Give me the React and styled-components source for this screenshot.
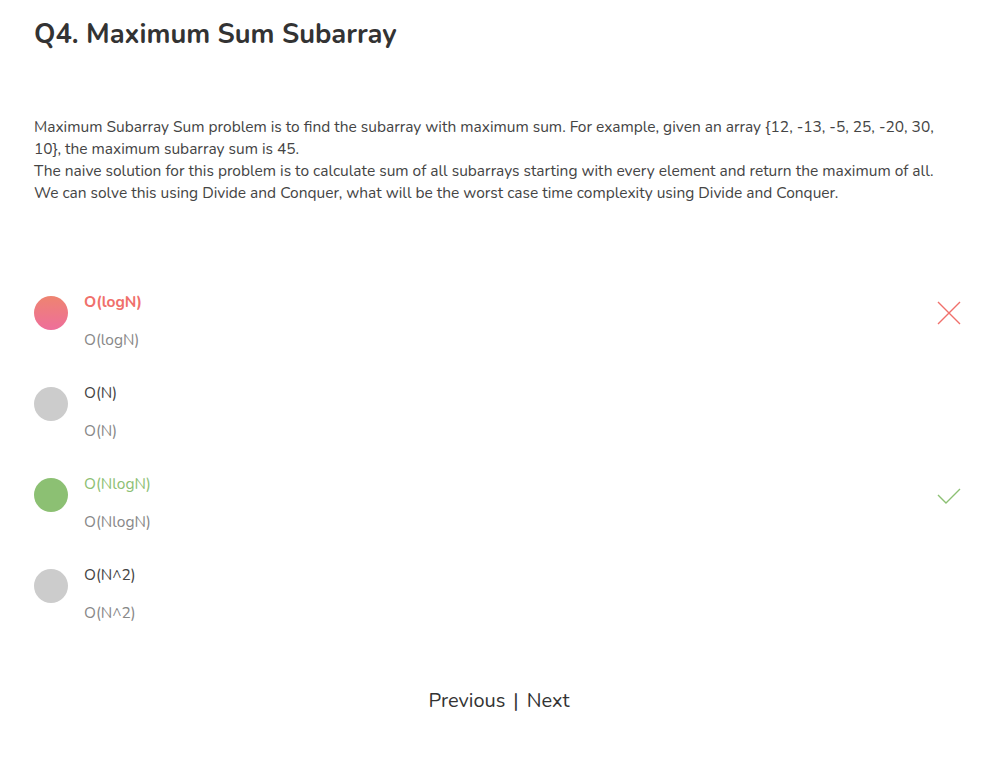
import React from "react";
import styled, { createGlobalStyle } from "styled-components";

const GlobalStyle = createGlobalStyle`
  body {
    margin: 0;
    background: #fff;
    font-family: "Nunito", "Lato", "Open Sans", sans-serif;
    color: #333;
  }
`;

const options = [
  { label: "O(logN)", state: "wrong" },
  { label: "O(N)", state: "none" },
  { label: "O(NlogN)", state: "right" },
  { label: "O(N^2)", state: "none" },
];

function App() {
  return (
    <Page>
      <GlobalStyle />
      <Title>Q4. Maximum Sum Subarray</Title>
      <Question>
        Maximum Subarray Sum problem is to find the subarray with maximum sum. For example, given an array {"{"}12, -13, -5, 25, -20, 30, 10{"}"}, the maximum subarray sum is 45.
        <br />
        The naive solution for this problem is to calculate sum of all subarrays starting with every element and return the maximum of all.
        <br />
        We can solve this using Divide and Conquer, what will be the worst case time complexity using Divide and Conquer.
      </Question>
      <Options>
        {options.map((o) => (
          <Option key={o.label}>
            <Dot state={o.state} />
            <OptionText>
              <OptionLabel state={o.state}>{o.label}</OptionLabel>
              <OptionSub>{o.label}</OptionSub>
            </OptionText>
            <Mark state={o.state}>
              {o.state === "wrong" && (
                <svg width="24" height="24" viewBox="0 0 24 24">
                  <path d="M1 1 L23 23 M23 1 L1 23" stroke="#f0706b" strokeWidth="1.4" fill="none" />
                </svg>
              )}
              {o.state === "right" && (
                <svg width="24" height="18" viewBox="0 0 24 18">
                  <path d="M1 8 L9 16 L23 2" stroke="#8cc073" strokeWidth="1.4" fill="none" />
                </svg>
              )}
            </Mark>
          </Option>
        ))}
      </Options>
      <Pager>
        <PagerLink>Previous</PagerLink>
        <Sep>|</Sep>
        <PagerLink>Next</PagerLink>
      </Pager>
    </Page>
  );
}

const Page = styled.div`
  padding: 16px 28px 40px 34px;
`;

const Title = styled.h1`
  margin: 0;
  font-size: 27.3px;
  font-weight: 700;
  line-height: 36px;
  color: #333;
`;

const Question = styled.p`
  margin: 64px 0 0;
  font-size: 15.5px;
  line-height: 22px;
  color: #444;
`;

const Options = styled.div`
  margin-top: 80px;
  display: flex;
  flex-direction: column;
  gap: 22px;
`;

const Option = styled.div`
  display: flex;
  align-items: flex-start;
  min-height: 69px;
`;

const Dot = styled.div`
  width: 34px;
  height: 34px;
  border-radius: 50%;
  margin-top: 12px;
  flex-shrink: 0;
  background: ${(p) =>
    p.state === "wrong"
      ? "linear-gradient(180deg, #ee8470 0%, #ee6e9b 100%)"
      : p.state === "right"
      ? "#8cc073"
      : "#cccccc"};
`;

const OptionText = styled.div`
  margin: 7px 0 0 16px;
  display: flex;
  flex-direction: column;
  gap: 16px;
  flex: 1;
`;

const OptionLabel = styled.div`
  font-size: 15.5px;
  line-height: 22px;
  font-weight: ${(p) => (p.state === "wrong" ? 700 : 400)};
  color: ${(p) =>
    p.state === "wrong" ? "#f0706b" : p.state === "right" ? "#8cc073" : "#444"};
`;

const OptionSub = styled.div`
  font-size: 15.5px;
  line-height: 22px;
  color: #888;
`;

const Mark = styled.div`
  width: 30px;
  display: flex;
  justify-content: center;
  margin-top: ${(p) => (p.state === "right" ? "21px" : "17px")};
`;

const Pager = styled.div`
  margin-top: 61px;
  display: flex;
  justify-content: center;
  align-items: center;
  gap: 8px;
  font-size: 20px;
  color: #333;
`;

const PagerLink = styled.span`
  cursor: pointer;
`;

const Sep = styled.span``;

export default App;
